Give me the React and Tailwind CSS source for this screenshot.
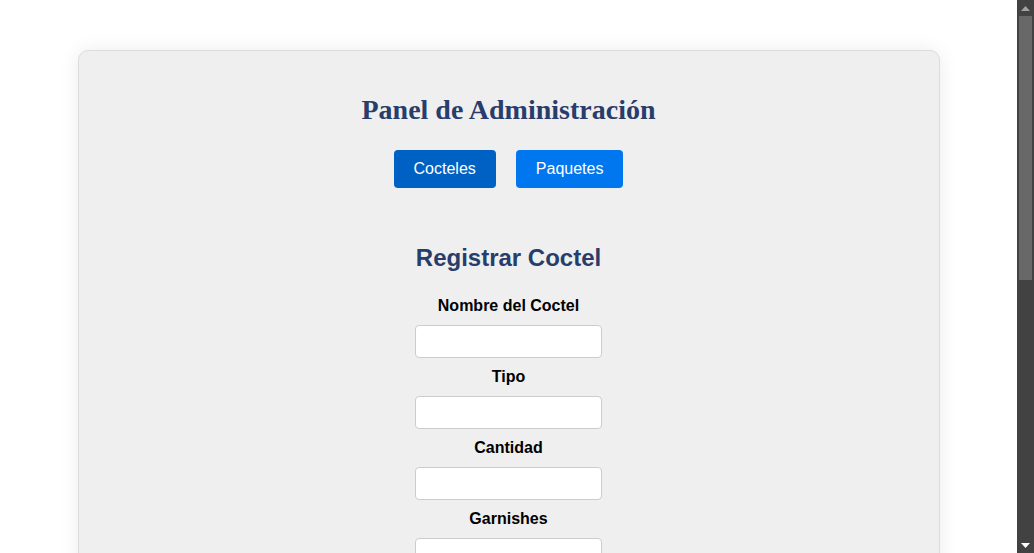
import React, { useState } from 'react';

const fields = ['Nombre del Coctel', 'Tipo', 'Cantidad', 'Garnishes', 'Precio', 'Descripción'];

function FakeScrollbar() {
  return (
    <div className="w-[17px] shrink-0 bg-[#424242] flex flex-col items-center">
      <div className="h-4 w-full flex items-center justify-center">
        <svg width="9" height="5" viewBox="0 0 9 5">
          <path d="M0 5 L4.5 0 L9 5 Z" fill="#a3a3a3" />
        </svg>
      </div>
      <div className="w-[13px] h-[264px] bg-[#686868]" />
      <div className="flex-1" />
      <div className="h-4 w-full flex items-center justify-center">
        <svg width="9" height="5" viewBox="0 0 9 5">
          <path d="M0 0 L9 0 L4.5 5 Z" fill="#ffffff" />
        </svg>
      </div>
    </div>
  );
}

function App() {
  const [tab, setTab] = useState('cocteles');

  return (
    <div className="h-screen flex bg-white">
      <div className="flex-1 overflow-y-auto [scrollbar-width:none]">
        <div className="pt-[50px] pb-10 font-['Liberation_Sans',Arial,sans-serif]">
          <div className="w-[862px] mx-auto bg-[#efefef] border border-[#dcdcdc] rounded-[10px] shadow-[0_0_20px_rgba(0,0,0,0.08)] pt-[44px] pb-10 flex flex-col items-center">
            <h1 className="font-['Liberation_Serif','Times_New_Roman',serif] font-bold text-[28px] leading-[30px] text-[#283d6b]">
              Panel de Administración
            </h1>

            <div className="flex gap-5 mt-[25px]">
              <button
                onClick={() => setTab('cocteles')}
                className={`h-[38px] px-5 rounded text-white text-base ${tab === 'cocteles' ? 'bg-[#0061c4]' : 'bg-[#0077ef]'}`}
              >
                Cocteles
              </button>
              <button
                onClick={() => setTab('paquetes')}
                className={`h-[38px] px-5 rounded text-white text-base ${tab === 'paquetes' ? 'bg-[#0061c4]' : 'bg-[#0077ef]'}`}
              >
                Paquetes
              </button>
            </div>

            <h2 className="mt-[56px] text-[24px] leading-7 font-bold text-[#283d6b]">
              {tab === 'cocteles' ? 'Registrar Coctel' : 'Registrar Paquete'}
            </h2>

            <form className="flex flex-col items-center mt-[25px]">
              {fields.map((f) => (
                <div key={f} className="flex flex-col items-center">
                  <label className="text-base font-bold text-black leading-[18px]">{f}</label>
                  <input
                    type="text"
                    className="mt-[10px] mb-[10px] w-[187px] h-[33px] bg-white border border-[#cccccc] rounded px-2 text-sm outline-none"
                  />
                </div>
              ))}
            </form>
          </div>
        </div>
      </div>
      <FakeScrollbar />
    </div>
  );
}

export default App;
